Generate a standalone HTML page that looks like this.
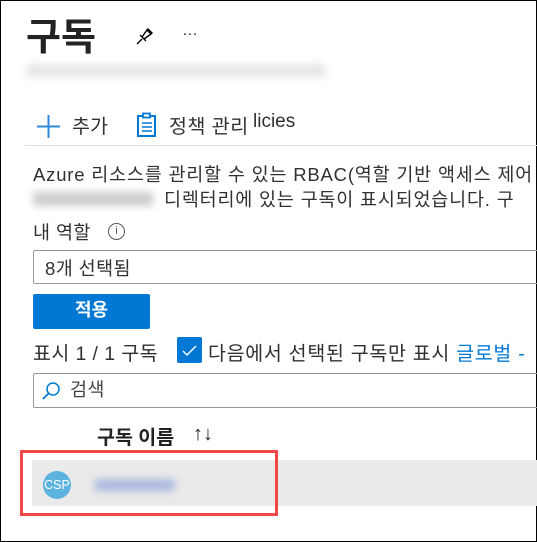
<!DOCTYPE html>
<html><head><meta charset="utf-8"><style>
body{margin:0;width:537px;height:542px;overflow:hidden;background:#fff;font-family:"Liberation Sans","Noto Sans CJK KR",sans-serif;color:#323130;position:relative}
.a{position:absolute;white-space:nowrap}
.t{font-size:18.5px;letter-spacing:0.4px}
.frame{position:absolute;left:0;top:0;width:535px;height:540px;border:1px solid #000}
</style></head><body>
<div class="frame"></div>
<div class="a" style="left:26px;top:6px;font-size:38px;font-weight:bold;color:#222">구독</div>
<svg class="a" style="left:134px;top:25px" width="22" height="22" viewBox="0 0 22 22"><path d="M3 19l5-5M6 10l6 6M8 12l5-7 4 4-7 5M13 5l1-1 4 4-1 1" fill="none" stroke="#000" stroke-width="1.4"/></svg>
<div class="a" style="left:182px;top:22px;font-size:16px;color:#333">…</div>
<div class="a" style="left:26px;top:64px;width:300px;height:13px;background:#e6e6e6;filter:blur(4px);border-radius:4px"></div>
<svg class="a" style="left:36px;top:114px" width="25" height="25"><path d="M12.5 1v23M1 12.5h23" stroke="#2b88d8" stroke-width="2"/></svg>
<div class="a" style="left:72px;top:110px;font-size:19.5px">추가</div>
<svg class="a" style="left:136px;top:112px" width="22" height="26" viewBox="0 0 22 26"><rect x="2" y="4" width="17" height="20" fill="none" stroke="#0078d4" stroke-width="2"/><rect x="7" y="1.5" width="7" height="4" fill="#fff" stroke="#0078d4" stroke-width="1.8"/><path d="M6 11h10M6 15h10M6 19h10" stroke="#0078d4" stroke-width="1.5"/></svg>
<div class="a" style="left:169px;top:110px;font-size:19.5px;letter-spacing:0.5px">정책 관리</div>
<div class="a" style="left:253px;top:111px;font-size:19px">licies</div>
<div class="a" style="left:25px;top:145px;width:512px;height:1px;background:#ddd"></div>
<div class="a t" style="left:33px;top:161px;letter-spacing:0.8px">Azure 리소스를 관리할 수 있는 RBAC(역할 기반 액세스 제어</div>
<div class="a" style="left:33px;top:192px;width:120px;height:14px;background:#ccc;filter:blur(4px)"></div>
<div class="a t" style="left:164px;top:186px;letter-spacing:0.8px">디렉터리에 있는 구독이 표시되었습니다. 구</div>
<div class="a t" style="left:33px;top:219px">내 역할</div>
<div class="a" style="left:108px;top:223px;width:15px;height:15px;border:1.3px solid #555;border-radius:50%;font-size:11px;text-align:center;line-height:15px;color:#555">i</div>
<div class="a" style="left:33px;top:250px;width:510px;height:34px;border:1px solid #999;border-radius:2px;box-sizing:border-box"></div>
<div class="a t" style="left:45px;top:255px">8개 선택됨</div>
<div class="a" style="left:33px;top:294px;width:117px;height:35px;background:#0078d4;border-radius:2px;color:#fff;font-weight:bold;font-size:18px;text-align:center;line-height:33px">적용</div>
<div class="a t" style="left:33px;top:337px;font-size:19.5px">표시 1 / 1 구독</div>
<div class="a" style="left:177px;top:337px;width:25px;height:26px;background:#0078d4;border-radius:2px"></div>
<svg class="a" style="left:177px;top:337px" width="25" height="26"><path d="M6 14l4 4 9-9" fill="none" stroke="#fff" stroke-width="1.5"/></svg>
<div class="a t" style="left:208px;top:337px;font-size:19.5px;letter-spacing:0.7px">다음에서 선택된 구독만 표시 <span style="color:#0078d4">글로벌 -</span></div>
<div class="a" style="left:33px;top:373px;width:510px;height:35px;border:1px solid #999;border-radius:2px;box-sizing:border-box"></div>
<svg class="a" style="left:40px;top:380px" width="22" height="22"><circle cx="13" cy="9" r="6" fill="none" stroke="#0078d4" stroke-width="1.5"/><path d="M9 13l-6 6" stroke="#0078d4" stroke-width="1.8"/></svg>
<div class="a t" style="left:70px;top:376px;color:#444">검색</div>
<div class="a" style="left:97px;top:421px;font-size:19.5px;font-weight:bold;color:#222">구독 이름</div>
<div class="a" style="left:193px;top:423px;font-size:20px;color:#222">↑↓</div>
<div class="a" style="left:32px;top:460px;width:505px;height:46px;background:#ebeaea"></div>
<div class="a" style="left:43px;top:471px;width:28px;height:28px;border-radius:50%;background:#5bb3de;color:#fff;font-size:12.5px;text-align:center;line-height:28px">CSP</div>
<div class="a" style="left:95px;top:479px;width:80px;height:12px;background:#aab8e0;filter:blur(4px)"></div>
<div class="a" style="left:20px;top:450px;width:258px;height:66px;border:3px solid #f04848;box-sizing:border-box"></div>
</body></html>
